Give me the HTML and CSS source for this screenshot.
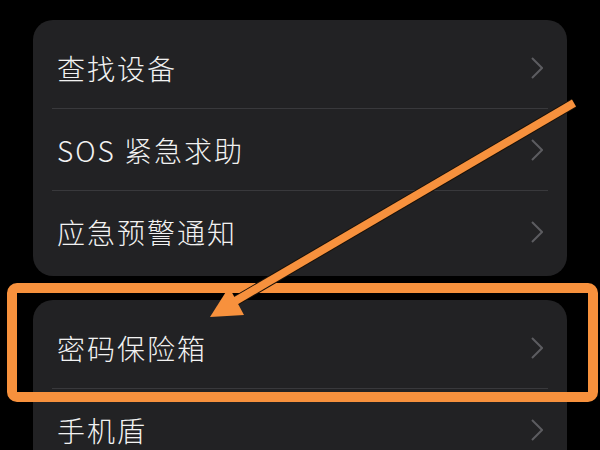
FILE: index.html
```html
<!DOCTYPE html>
<html lang="zh-CN">
<head>
  <meta charset="UTF-8" />
  <meta name="viewport" content="width=device-width, initial-scale=1.0"/>
  <title>设置</title>
  <link rel="stylesheet" href="styles.css">
</head>
<body>

  <div class="screen">
    <div class="group">
      <div class="row">
        <span class="label">查找设备</span>
        <svg class="chevron" viewBox="0 0 12 22"><polyline points="1,1 11,11 1,21" /></svg>
      </div>
      <hr class="divider">
      <div class="row">
        <span class="label">SOS 紧急求助</span>
        <svg class="chevron" viewBox="0 0 12 22"><polyline points="1,1 11,11 1,21" /></svg>
      </div>
      <hr class="divider">
      <div class="row">
        <span class="label">应急预警通知</span>
        <svg class="chevron" viewBox="0 0 12 22"><polyline points="1,1 11,11 1,21" /></svg>
      </div>
    </div>

    <div class="group">
      <div class="row">
        <span class="label">密码保险箱</span>
        <svg class="chevron" viewBox="0 0 12 22"><polyline points="1,1 11,11 1,21" /></svg>
      </div>
      <hr class="divider">
      <div class="row">
        <span class="label">手机盾</span>
        <svg class="chevron" viewBox="0 0 12 22"><polyline points="1,1 11,11 1,21" /></svg>
      </div>
    </div>

    <!-- annotation drawn over the screenshot -->
    <svg class="markup" viewBox="0 0 600 450">
      <rect x="12" y="288" width="581" height="109" rx="5" />
      <line class="shadow" x1="574" y1="103" x2="232" y2="303" />
      <line x1="574" y1="103" x2="232" y2="303" />
      <polygon points="210,317 244,315 229,287" />
    </svg>
  </div>

</body>
</html>
```

FILE: styles.css
```css
body {
  margin: 0;
  padding: 0;
  background: #000;
  font-family: "Noto Sans CJK SC", "Noto Sans", sans-serif;
  color: #f2f2f2;
}

.screen {
  position: relative;
  width: 600px;
  height: 450px;
  overflow: hidden;
  padding: 20px 33px 0;
  box-sizing: border-box;
  display: flex;
  flex-direction: column;
  gap: 24px;
}

.group {
  background: #222224;
  border-radius: 20px;
  padding: 7px 0 4px;
  flex-shrink: 0;
}

.row {
  height: 81px;
  display: flex;
  align-items: center;
  justify-content: space-between;
  padding: 0 24px 0 24px;
}

.label {
  font-size: 28px;
  font-weight: 300;
  letter-spacing: 2px;
}

.chevron {
  width: 12px;
  height: 22px;
  fill: none;
  stroke: #5c5c60;
  stroke-width: 2;
}

.divider {
  border: none;
  height: 1px;
  background: #39393c;
  margin: 0 19px;
}

.markup {
  position: absolute;
  top: 0;
  left: 0;
  width: 600px;
  height: 450px;
}

.markup rect {
  fill: none;
  stroke: #f7913d;
  stroke-width: 10;
}

.markup line {
  stroke: #f7913d;
  stroke-width: 8;
}

.markup line.shadow {
  stroke: #1a1108;
  stroke-width: 10;
}

.markup polygon {
  fill: #f7913d;
}
```
